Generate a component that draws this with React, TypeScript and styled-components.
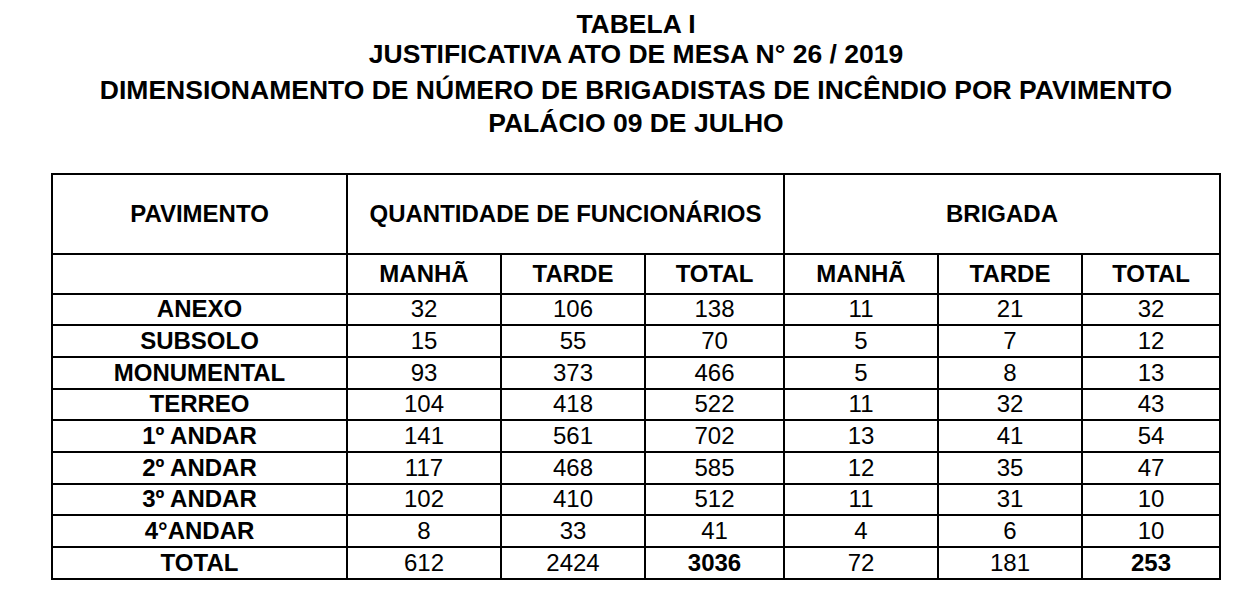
import React from "react";
import styled, { createGlobalStyle } from "styled-components";

const GlobalStyle = createGlobalStyle`
  html, body {
    margin: 0;
    padding: 0;
    background: #ffffff;
  }
  body {
    font-family: "Liberation Sans", Arial, sans-serif;
    color: #000000;
  }
`;

// Página com o título e a tabela
const Page = styled.div`
  width: 1170px;
  margin-left: 51px;
  padding-top: 9px;
`;

const TitleBlock = styled.header`
  display: flex;
  flex-direction: column;
  align-items: center;
  margin-bottom: 35px;
`;

const TitleLine = styled.h1<{ $top?: number }>`
  margin: ${(p) => p.$top ?? 0}px 0 0 0;
  font-size: 26.5px;
  line-height: 30px;
  font-weight: 700;
  white-space: nowrap;
`;

const Table = styled.table`
  width: 1170px;
  border-collapse: collapse;
  table-layout: fixed;
  border: 2px solid #000;
`;

const HeadRow = styled.tr<{ $h: number }>`
  height: ${(p) => p.$h}px;
`;

const BodyRow = styled.tr`
  height: 31.7px;
`;

const Cell = styled.td<{ $bold?: boolean }>`
  border: 2px solid #000;
  padding: 0;
  text-align: center;
  vertical-align: middle;
  font-size: 24px;
  line-height: 26px;
  font-weight: ${(p) => (p.$bold ? 700 : 400)};
  white-space: nowrap;
`;

const colWidths = [295, 154, 144, 139, 154, 144, 138];

type Linha = {
  pavimento: string;
  valores: number[];
  negrito?: number[];
};

const linhas: Linha[] = [
  { pavimento: "ANEXO", valores: [32, 106, 138, 11, 21, 32] },
  { pavimento: "SUBSOLO", valores: [15, 55, 70, 5, 7, 12] },
  { pavimento: "MONUMENTAL", valores: [93, 373, 466, 5, 8, 13] },
  { pavimento: "TERREO", valores: [104, 418, 522, 11, 32, 43] },
  { pavimento: "1º ANDAR", valores: [141, 561, 702, 13, 41, 54] },
  { pavimento: "2º ANDAR", valores: [117, 468, 585, 12, 35, 47] },
  { pavimento: "3º ANDAR", valores: [102, 410, 512, 11, 31, 10] },
  { pavimento: "4°ANDAR", valores: [8, 33, 41, 4, 6, 10] },
  { pavimento: "TOTAL", valores: [612, 2424, 3036, 72, 181, 253], negrito: [2, 5] },
];

const subTitulos = ["MANHÃ", "TARDE", "TOTAL", "MANHÃ", "TARDE", "TOTAL"];

export default function App() {
  return (
    <>
      <GlobalStyle />
      <Page>
        <TitleBlock>
          <TitleLine>TABELA I</TitleLine>
          <TitleLine>JUSTIFICATIVA ATO DE MESA N° 26 / 2019</TitleLine>
          <TitleLine $top={6}>
            DIMENSIONAMENTO DE NÚMERO DE BRIGADISTAS DE INCÊNDIO POR PAVIMENTO
          </TitleLine>
          <TitleLine $top={2.5}>PALÁCIO 09 DE JULHO</TitleLine>
        </TitleBlock>

        <Table>
          <colgroup>
            {colWidths.map((w, i) => (
              <col key={i} style={{ width: w }} />
            ))}
          </colgroup>
          <thead>
            <HeadRow $h={80}>
              <Cell as="th" $bold>PAVIMENTO</Cell>
              <Cell as="th" $bold colSpan={3}>
                QUANTIDADE DE FUNCIONÁRIOS
              </Cell>
              <Cell as="th" $bold colSpan={3}>
                BRIGADA
              </Cell>
            </HeadRow>
            <HeadRow $h={40}>
              <Cell as="th" />
              {subTitulos.map((t, i) => (
                <Cell as="th" $bold key={i}>
                  {t}
                </Cell>
              ))}
            </HeadRow>
          </thead>
          <tbody>
            {linhas.map((l) => (
              <BodyRow key={l.pavimento}>
                <Cell $bold>{l.pavimento}</Cell>
                {l.valores.map((v, i) => (
                  <Cell key={i} $bold={l.negrito?.includes(i)}>
                    {v}
                  </Cell>
                ))}
              </BodyRow>
            ))}
          </tbody>
        </Table>
      </Page>
    </>
  );
}
